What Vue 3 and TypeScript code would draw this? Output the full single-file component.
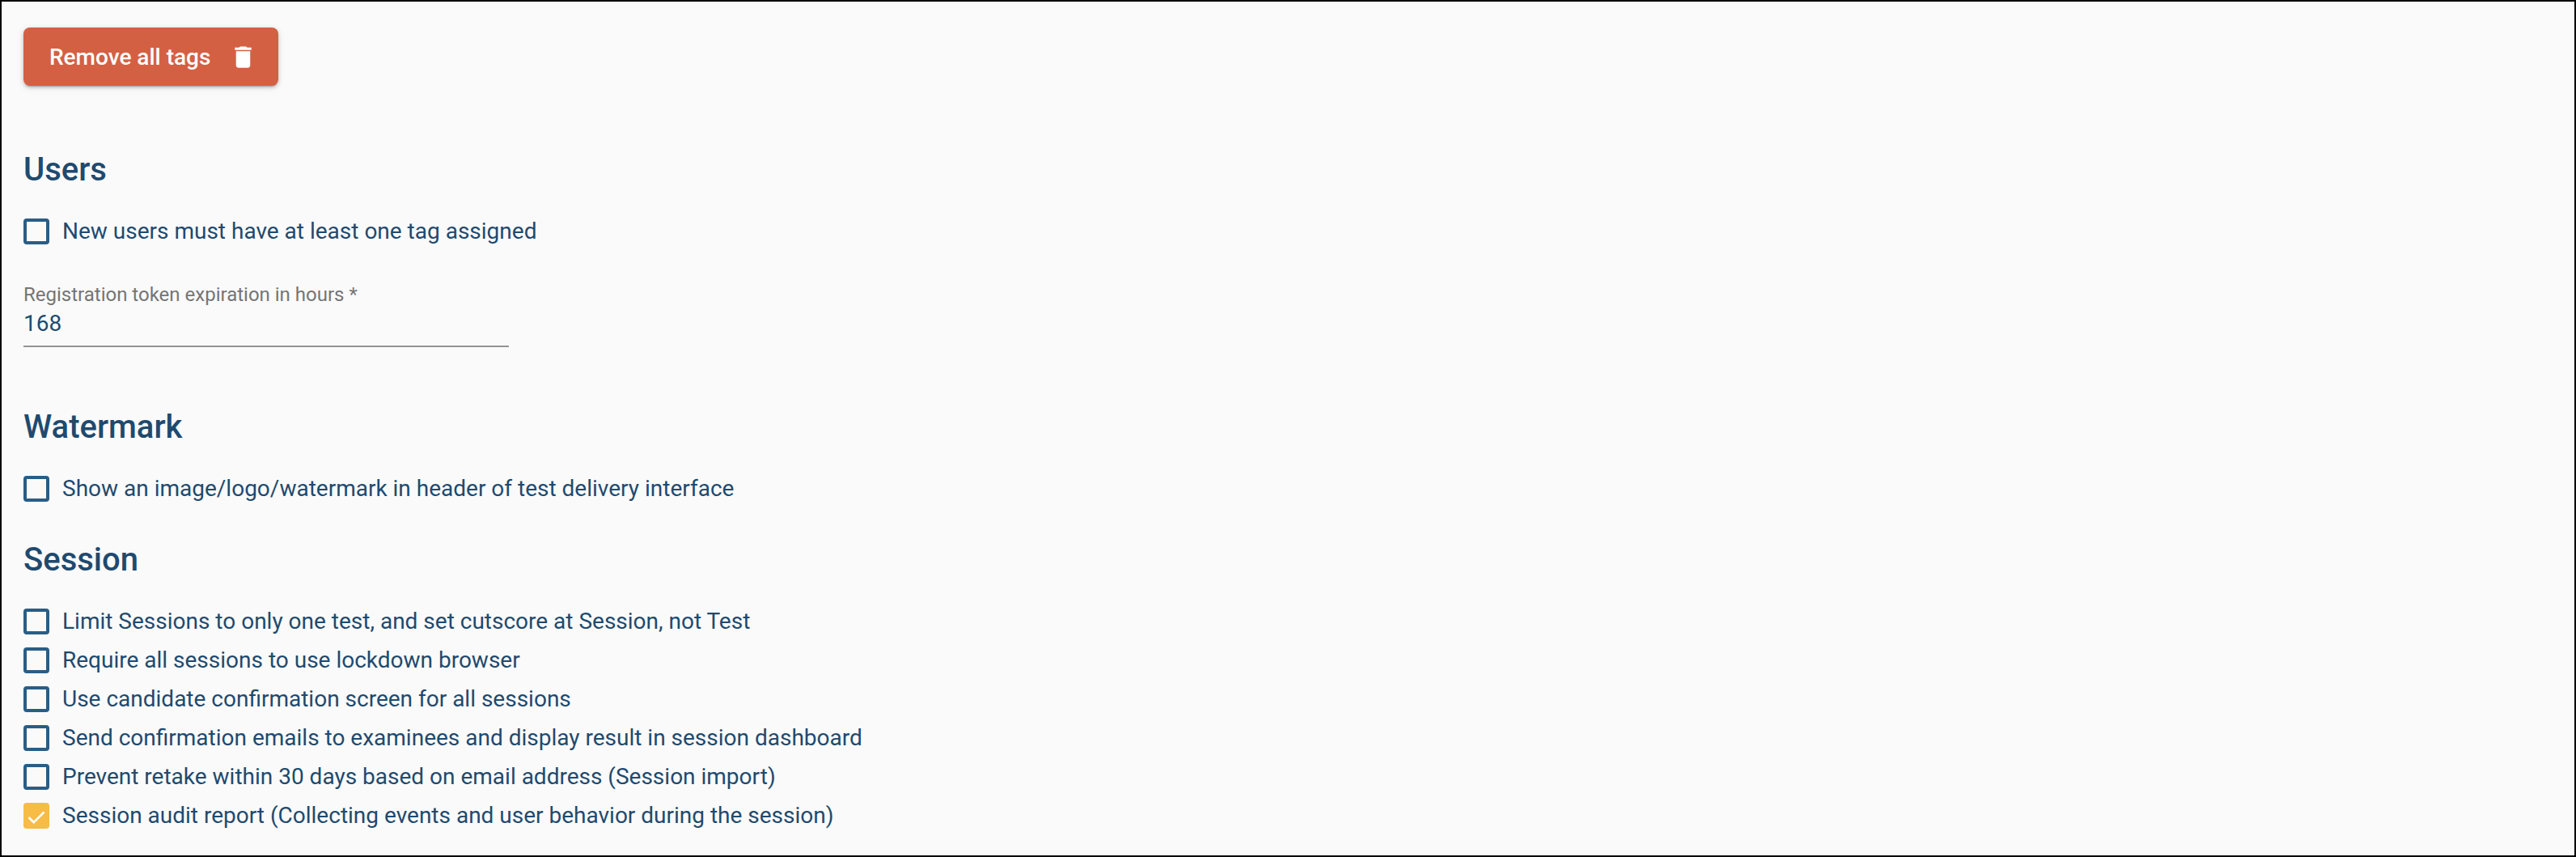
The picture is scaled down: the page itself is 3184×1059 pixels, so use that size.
<script setup lang="ts">
const sessionOptions: { label: string; checked: boolean }[] = [
  { label: 'Limit Sessions to only one test, and set cutscore at Session, not Test', checked: false },
  { label: 'Require all sessions to use lockdown browser', checked: false },
  { label: 'Use candidate confirmation screen for all sessions', checked: false },
  { label: 'Send confirmation emails to examinees and display result in session dashboard', checked: false },
  { label: 'Prevent retake within 30 days based on email address (Session import)', checked: false },
  { label: 'Session audit report (Collecting events and user behavior during the session)', checked: true },
]
</script>

<template>
  <div class="page">
    <button class="remove-btn" type="button">
      <span class="btn-text">Remove all tags</span>
      <svg class="trash" viewBox="0 0 24 24" aria-hidden="true">
        <path d="M6 19c0 1.1.9 2 2 2h8c1.1 0 2-.9 2-2V7H6v12zM19 4h-3.5l-1-1h-5l-1 1H5v2h14V4z" fill="currentColor" />
      </svg>
    </button>

    <h2 class="heading users">Users</h2>
    <label class="check">
      <span class="box"></span>
      <span>New users must have at least one tag assigned</span>
    </label>

    <div class="field">
      <div class="field-label">Registration token expiration in hours *</div>
      <div class="field-value">168</div>
    </div>

    <h2 class="heading watermark">Watermark</h2>
    <label class="check">
      <span class="box"></span>
      <span>Show an image/logo/watermark in header of test delivery interface</span>
    </label>

    <h2 class="heading session">Session</h2>
    <div class="stack">
      <label v-for="opt in sessionOptions" :key="opt.label" class="check">
        <span class="box" :class="{ on: opt.checked }">
          <svg v-if="opt.checked" viewBox="0 0 32 32" class="tick" aria-hidden="true">
            <path d="M6.5 18l6.2 6.2L25.5 11.5" fill="none" stroke="#fff" stroke-width="2.6" />
          </svg>
        </span>
        <span>{{ opt.label }}</span>
      </label>
    </div>
  </div>
</template>

<style>
html, body { margin: 0; background: #fafafa; }
</style>

<style scoped>
.page {
  box-sizing: border-box;
  width: 3184px;
  height: 1059px;
  border: 2px solid #000;
  background: #fafafa;
  padding: 32px 27px 0;
  font-family: Roboto, sans-serif;
  color: #1f4a6e;
  overflow: hidden;
}
.remove-btn {
  display: flex;
  align-items: center;
  box-sizing: border-box;
  width: 315px;
  height: 72px;
  padding: 0 32px;
  border: 0;
  border-radius: 8px;
  background: #d46044;
  color: #fff;
  font-family: Roboto, sans-serif;
  font-size: 28px;
  font-weight: 500;
  white-space: nowrap;
  box-shadow: 0 3px 2px -2px rgba(0,0,0,.2), 0 2px 4px 0 rgba(0,0,0,.16), 0 2px 8px 0 rgba(0,0,0,.12);
}
.trash { width: 35px; height: 35px; margin-left: 23px; flex: none; }
.heading {
  margin: 0;
  font-size: 40px;
  line-height: 48px;
  font-weight: 500;
  color: #1f4a6e;
}
.users { margin-top: 80px; margin-bottom: 36px; }
.watermark { margin-top: 75px; margin-bottom: 36px; }
.session { margin-top: 48px; margin-bottom: 36px; }
.check {
  display: flex;
  align-items: center;
  gap: 16px;
  height: 32px;
  font-size: 28px;
  line-height: 32px;
}
.box {
  box-sizing: border-box;
  width: 32px;
  height: 32px;
  flex: none;
  border: 4px solid #2a5d84;
  border-radius: 4px;
}
.box.on { border: 0; background: #f6bc45; }
.tick { display: block; width: 32px; height: 32px; }
.stack { display: flex; flex-direction: column; gap: 16px; }
.field {
  box-sizing: border-box;
  width: 600px;
  margin-top: 48px;
  border-bottom: 2px solid #949494;
}
.field-label { font-size: 24px; line-height: 28px; color: #757575; }
.field-value { font-size: 28px; line-height: 32px; padding: 6px 0 11px; }
</style>
